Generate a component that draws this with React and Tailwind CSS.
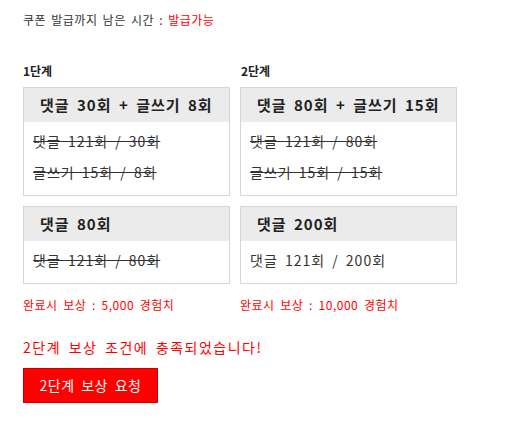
export default function App() {
  const font = { fontFamily: '"Noto Sans CJK KR", "Noto Sans", sans-serif' }

  const Box = ({ title, lines }) => (
    <div className="border border-[#d5d5d5] bg-white">
      <div className="h-[34px] bg-[#ebebeb] flex items-center pl-4 text-[15px] font-semibold text-[#222] whitespace-nowrap tracking-[1px] [word-spacing:3px]">
        {title}
      </div>
      <div className="pl-[9px] pt-1 pb-[7px]">
        {lines.map((l, i) => (
          <p
            key={i}
            className={`h-[31px] leading-[31px] text-[14px] text-[#333] tracking-[1px] [word-spacing:3px] ${l.done ? 'line-through' : ''}`}
          >
            {l.text}
          </p>
        ))}
      </div>
    </div>
  )

  return (
    <div className="bg-white min-h-[421px] px-[23px] pt-[11px]" style={font}>
      <p className="text-[12px] leading-[18px] text-[#333] tracking-[0.5px] [word-spacing:2px]">
        쿠폰 발급까지 남은 시간 : <span className="text-[#ff0000]">발급가능</span>
      </p>

      <div className="mt-[33px] grid grid-cols-[207px_217px] gap-x-[10px]">
        <div className="flex flex-col">
          <h3 className="text-[12px] leading-[18px] font-bold text-[#222] mb-[7px]">1단계</h3>
          <Box
            title="댓글 30회 + 글쓰기 8회"
            lines={[
              { text: '댓글 121회 / 30회', done: true },
              { text: '글쓰기 15회 / 8회', done: true },
            ]}
          />
          <div className="mt-[10px]">
            <Box title="댓글 80회" lines={[{ text: '댓글 121회 / 80회', done: true }]} />
          </div>
          <p className="mt-[12px] text-[12px] leading-[18px] text-[#ff0000] tracking-[0.5px] [word-spacing:2.5px]">
            완료시 보상 : 5,000 경험치
          </p>
        </div>
        <div className="flex flex-col">
          <h3 className="text-[12px] leading-[18px] font-bold text-[#222] mb-[7px] pl-px">2단계</h3>
          <Box
            title="댓글 80회 + 글쓰기 15회"
            lines={[
              { text: '댓글 121회 / 80회', done: true },
              { text: '글쓰기 15회 / 15회', done: true },
            ]}
          />
          <div className="mt-[10px]">
            <Box title="댓글 200회" lines={[{ text: '댓글 121회 / 200회', done: false }]} />
          </div>
          <p className="mt-[12px] text-[12px] leading-[18px] text-[#ff0000] tracking-[0.5px] [word-spacing:2.5px]">
            완료시 보상 : 10,000 경험치
          </p>
        </div>
      </div>

      <p className="mt-[23px] text-[14px] leading-[20px] text-[#ff0000] tracking-[1.5px] [word-spacing:3px]">
        2단계 보상 조건에 충족되었습니다!
      </p>

      <button className="mt-[11px] w-[135px] h-[35px] bg-[#ff0000] border border-[#cc0000] text-white text-[14px] tracking-[0.5px] [word-spacing:3px]">
        2단계 보상 요청
      </button>
    </div>
  )
}
